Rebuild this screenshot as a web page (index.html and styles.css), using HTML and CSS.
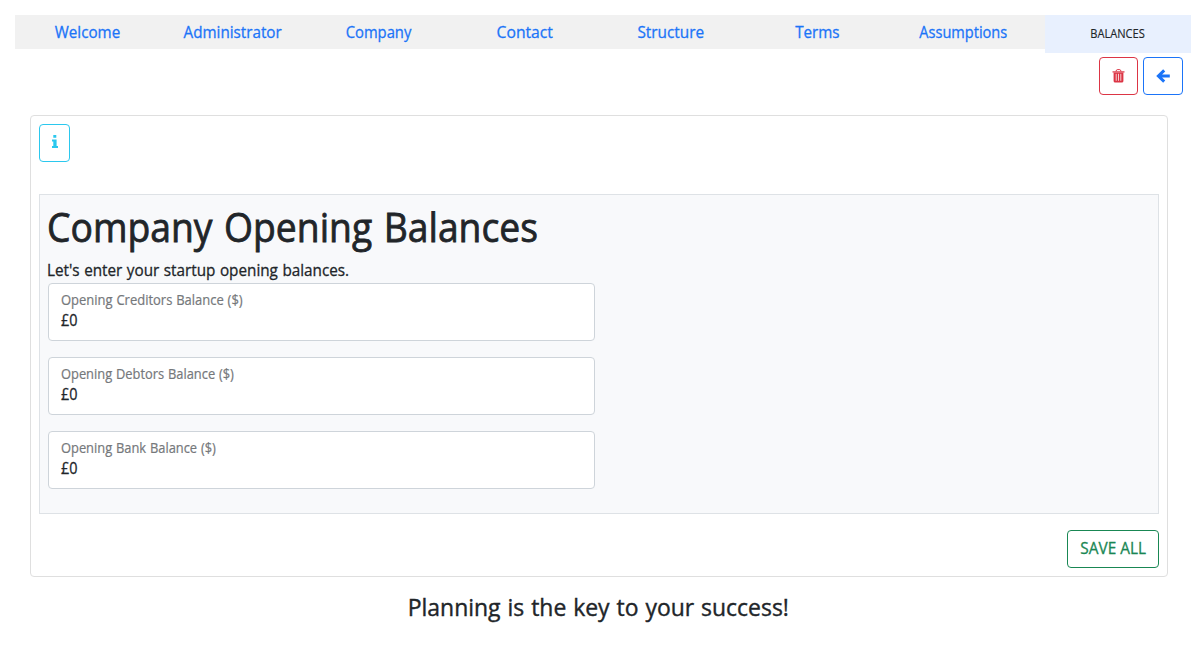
FILE: index.html
```html
<!DOCTYPE html>
<html lang="en">
<head>
<meta charset="utf-8">
<title>Company Opening Balances</title>
<link rel="stylesheet" href="styles.css">
</head>
<body>
<nav class="tabs">
  <a class="tab"><span class="t-welcome">Welcome</span></a>
  <a class="tab"><span class="t-admin">Administrator</span></a>
  <a class="tab"><span class="t-company">Company</span></a>
  <a class="tab"><span class="t-contact">Contact</span></a>
  <a class="tab"><span class="t-structure">Structure</span></a>
  <a class="tab"><span class="t-terms">Terms</span></a>
  <a class="tab"><span class="t-assume">Assumptions</span></a>
  <a class="tab current"><span class="t-balances">BALANCES</span></a>
</nav>
<div class="tools">
  <button class="btn danger" aria-label="Delete">
    <svg width="13" height="14" viewBox="0 0 13 14"><path d="M4 2.4Q4.3.6 5.2.6h2.6Q8.7.6 9 2.4" fill="none" stroke="currentColor" stroke-width="1"/><path d="M.5 2.3h12v1.2H.5z" fill="currentColor"/><path d="M1.6 3.4h9.8V12q0 1.6-1.5 1.6H3.1Q1.6 13.6 1.6 12z" fill="currentColor"/><path d="M4.2 4.8v7M6.5 4.8v7M8.8 4.8v7" stroke="#fff" stroke-width=".9" opacity=".85"/></svg>
  </button>
  <button class="btn primary" aria-label="Back">
    <svg width="14" height="14" viewBox="0 0 14 14"><path d="M8.2 1.4 2.4 7l5.8 5.6M2.6 7h11.2" fill="none" stroke="currentColor" stroke-width="3"/></svg>
  </button>
</div>
<main class="card">
  <button class="btn info" aria-label="Information">
    <svg width="6" height="13" viewBox="0 0 6 13"><path d="M1.3 0h3v2.8h-3zM0 4.6h4.6v6.4H6V13H0v-2h1.3V6.6H0z" fill="currentColor"/></svg>
  </button>
  <section class="panel">
    <h1><span class="t-title">Company Opening Balances</span></h1>
    <p class="intro"><span class="t-intro">Let's enter your startup opening balances.</span></p>
    <div class="field"><label class="t-creditors">Opening Creditors Balance ($)</label><div class="value">£0</div></div>
    <div class="field"><label class="t-debtors">Opening Debtors Balance ($)</label><div class="value">£0</div></div>
    <div class="field"><label class="t-bank">Opening Bank Balance ($)</label><div class="value">£0</div></div>
  </section>
  <div class="actions"><button class="btn save"><span class="t-save">SAVE ALL</span></button></div>
</main>
<footer class="motto"><span class="t-motto">Planning is the key to your success!</span></footer>
</body>
</html>
```
FILE: styles.css
```css
* { box-sizing: border-box; }
body { margin: 0; padding: 15px 7px 0 15px; height: 664px; overflow: hidden; background: #fff; color: #212529; font: 500 16px/24px "Open Sans", "Noto Sans", sans-serif; -webkit-text-stroke: .3px currentColor; }
.tabs { display: flex; height: 34px; background: #f1f1f1; }
.tab { width: 146px; margin-left: -1px; margin-right: 1px; line-height: 34px; text-align: center; color: #1b74f8; white-space: nowrap; }
.current { height: 38px; margin: 0 0 0 auto; line-height: 38px; background: #e8f0fe; color: #212529; font-size: 12px; -webkit-text-stroke-width: .15px; }
.tools { display: flex; justify-content: flex-end; gap: 5px; padding: 8px 8px 0 0; }
.btn { display: flex; align-items: center; justify-content: center; height: 38px; padding: 0; border: 1px solid currentColor; border-radius: 4px; background: #fff; font: inherit; white-space: nowrap; }
.btn svg { display: block; margin-bottom: 1px; }
.danger { width: 39px; color: #dc3545; }
.primary { width: 40px; color: #1b74f8; }
.info { width: 31px; color: #2bc8ee; }
.info svg { margin-bottom: 3px; }
.save { width: 92px; padding-bottom: 2px; color: #198754; }
.card { width: 1138px; height: 462px; margin: 20px 0 0 15px; padding: 8px; border: 1px solid #dfdfdf; border-radius: 4px; }
.panel { height: 320px; margin-top: 32px; padding: 8px; border: 1px solid #dee2e6; background: #f8f9fb; }
h1 { margin: 0 0 7px -1px; font-weight: 500; font-size: 40px; line-height: 48px; white-space: nowrap; -webkit-text-stroke-width: .8px; }
.intro { margin: 0 0 1px -1px; white-space: nowrap; }
.field { width: 547px; height: 58px; margin-bottom: 16px; padding: 6px 12px; border: 1px solid #ced4da; border-radius: 4px; background: #fff; }
.field label { display: block; width: max-content; color: #75787b; font-size: 13.6px; line-height: 20px; -webkit-text-stroke-width: .2px; }
.value { width: max-content; line-height: 20px; transform: scaleX(.9); }
.actions { display: flex; justify-content: flex-end; margin-top: 16px; }
.motto { width: 1168px; margin-top: 15px; padding-right: 1px; text-align: center; font-size: 24px; line-height: 29px; -webkit-text-stroke-width: .4px; }

/* Condensed widths per label */
.tab span, h1 span, .intro span, .save span, .motto span { display: inline-block; }
h1 span, .intro span, .field label, .value { transform-origin: 0 50%; }
.t-welcome { transform: scaleX(.95); }
.t-admin { transform: scaleX(.95); }
.t-company { transform: scaleX(.925); }
.t-contact { transform: scaleX(.98); }
.t-structure { transform: scaleX(.96); }
.t-terms { transform: scaleX(.95); }
.t-assume { transform: scaleX(.91); }
.t-balances { transform: scaleX(.925); }
.t-title { transform: scaleX(.932); word-spacing: 2px; }
.t-intro { transform: scaleX(.954); word-spacing: .6px; }
.t-creditors { transform: scaleX(.955); word-spacing: .5px; }
.t-debtors { transform: scaleX(.947); word-spacing: .5px; }
.t-bank { transform: scaleX(.947); word-spacing: .5px; }
.t-save { transform: scaleX(.96); }
.t-motto { transform: scaleX(.956); word-spacing: 1px; }
```
